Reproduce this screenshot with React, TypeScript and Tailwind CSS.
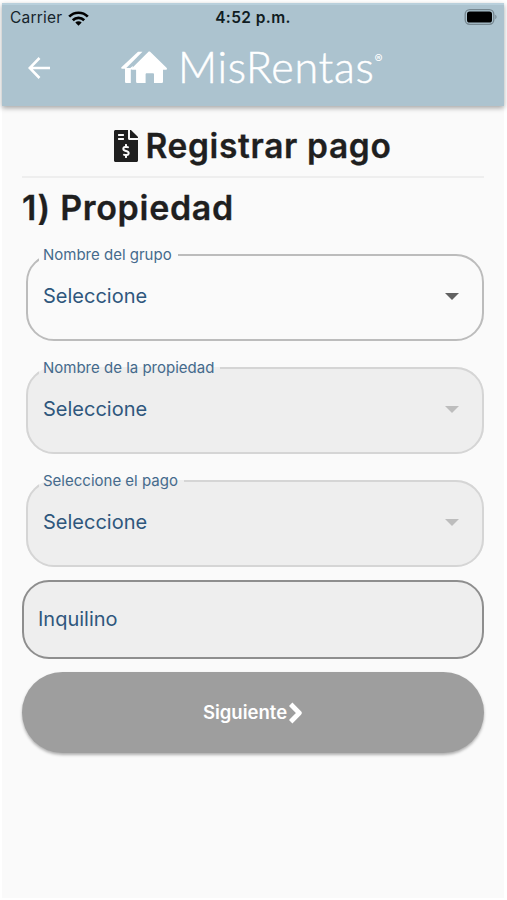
import React from "react";
import { FaFileInvoiceDollar } from "react-icons/fa";

function StatusBar() {
  return (
    <div className="relative flex h-[26px] items-center justify-between pl-2 pr-[6px]">
      <div className="flex items-center gap-[6px] text-[#16242c]">
        <span className="text-[15.5px] leading-[26px] tracking-[0.2px]">Carrier</span>
        <svg width="21" height="15" viewBox="0 0 21 15" fill="none" stroke="#000" strokeWidth="2.7">
          <path d="M1.2 5.6a13.2 13.2 0 0 1 18.6 0" />
          <path d="M4.8 9.2a8.1 8.1 0 0 1 11.4 0" />
          <path d="M10.5 14.8 7.3 11.5a4.6 4.6 0 0 1 6.4 0Z" fill="#000" stroke="none" />
        </svg>
      </div>
      <span className="absolute left-0 w-full text-center text-[15.5px] font-semibold leading-[26px] tracking-[0.4px] text-[#101c22]">
        4:52 p.m.
      </span>
      <svg className="-mt-[2px]" width="34" height="16" viewBox="0 0 34 16">
        <rect x="1.2" y="0.7" width="28.6" height="14.6" rx="4.5" fill="none" stroke="#75868f" strokeWidth="1.3" />
        <rect x="3" y="2.5" width="25" height="11" rx="2.6" fill="#000" />
        <path d="M31.3 5.8c1.6.6 1.6 3.8 0 4.4Z" fill="#75868f" />
      </svg>
    </div>
  );
}

function Logo() {
  return (
    <div className="flex items-start text-white">
      <svg className="mt-[7px]" width="46" height="33" viewBox="0 0 46 33" fill="#fff">
        <path d="M17 .8h4.500L4.600 17.800H1.200C0 17.800-.2 16.900.7 16Z" />
        <path d="M4 17h5.300l2.500-2v3.500h-2V32H5.500C4.500 32 4 31.500 4 30.500Z" />
        <path d="M27.200 1c.7-.6 1.500-.6 2.200 0L45.500 16.800c.9 1 .4 2-.7 2H42V30.500c0 1-.6 1.500-1.500 1.500H33v-8.500c0-.8-.4-1.200-1.200-1.200h-6c-.8 0-1.200.4-1.200 1.200V32h-8c-1 0-1.500-.5-1.500-1.500V18.800h-3c-1.100 0-1.500-1-.7-2Z" />
      </svg>
      <span className="ml-[11px] font-['Lato'] text-[43px] font-light leading-[46px] tracking-[0.7px] [-webkit-text-stroke:0.5px_white]">MisRentas</span>
      <span className="mt-[8px] text-[12px] leading-[14px]">®</span>
    </div>
  );
}

function Header() {
  return (
    <header className="relative h-[103px] border-t-2 border-[#b9d0dc] bg-[#acc3cf] shadow-[0_2px_5px_rgba(0,0,0,0.35)]">
      <StatusBar />
      <div className="flex items-start pl-[26px] pt-[13px]">
        <svg className="mt-[13px]" width="22" height="22" viewBox="0 0 22 22" fill="none" stroke="#fff" strokeWidth="2.600">
          <path d="M22 11H2M11.500 1 1.700 11l9.800 10" />
        </svg>
        <div className="ml-[71px]">
          <Logo />
        </div>
      </div>
    </header>
  );
}

function SelectField({ label, disabled = false }: { label: string; disabled?: boolean }) {
  return (
    <fieldset
      className={`ml-1 h-[95px] min-w-0 rounded-[28px] border-2 pl-[11px] pr-[23px] ${
        disabled ? "border-[#d5d5d5] bg-[#eeeeee]" : "border-[#bcbcbc]"
      }`}
    >
      <legend className="h-[18px] pl-1 pr-[6px] text-[15px] leading-[18px] text-[#456a8c]">{label}</legend>
      <div className="flex h-[64px] items-center justify-between pl-1">
        <span className="text-[20px] leading-6 text-[#2f577d]">Seleccione</span>
        <svg className="mt-px" width="14" height="7" viewBox="0 0 14 7" fill={disabled ? "#bdbdbd" : "#616161"}>
          <path d="M0 0h14L7 7Z" />
        </svg>
      </div>
    </fieldset>
  );
}

export default function App() {
  return (
    <div className="h-[900px] bg-white pl-[2px] pr-[3px] pt-[3px] font-['Inter','Liberation_Sans',sans-serif]">
      <div className="h-[895px] bg-[#fafafa]">
        <Header />
        <main className="pl-5 pr-5 pt-[20px]">
          <h1 className="flex h-[52px] items-start justify-center border-b-2 border-[#eeeeee] text-[#1f1f1f]">
            <FaFileInvoiceDollar className="mt-[4px] h-[32px] w-[24px]" />
            <span className="ml-[7px] text-[33.5px] font-semibold leading-[40px] tracking-[0.65px] [-webkit-text-stroke:0.3px_#1f1f1f]">
              Registrar pago
            </span>
          </h1>
          <h2 className="mt-[10px] text-[34px] font-semibold leading-[40px] tracking-[0.7px] text-[#1f1f1f] [-webkit-text-stroke:0.3px_#1f1f1f]">
            1) Propiedad
          </h2>
          <div className="mt-[18px] flex flex-col gap-[18px]">
            <SelectField label="Nombre del grupo" />
            <SelectField label="Nombre de la propiedad" disabled />
            <SelectField label="Seleccione el pago" disabled />
          </div>
          <div className="mt-[13px] flex h-[79px] items-center rounded-[27px] border-2 border-[#8e8e8e] bg-[#eeeeee] pb-[2px] pl-[14px] text-[20px] text-[#2f577d]">
            Inquilino
          </div>
          <button className="mt-[13px] flex h-[81px] w-full items-center justify-center rounded-full bg-[#9e9e9e] text-[18.5px] font-semibold text-white shadow-[0_2px_3px_rgba(0,0,0,0.3)]">
            <span>Siguiente</span>
            <svg className="ml-[2px]" width="14" height="22" viewBox="0 0 14 22" fill="none" stroke="#fff" strokeWidth="4.800" strokeLinejoin="round">
              <path d="m1.700 2.300 8.600 8.700-8.600 8.700" />
            </svg>
          </button>
        </main>
      </div>
    </div>
  );
}
